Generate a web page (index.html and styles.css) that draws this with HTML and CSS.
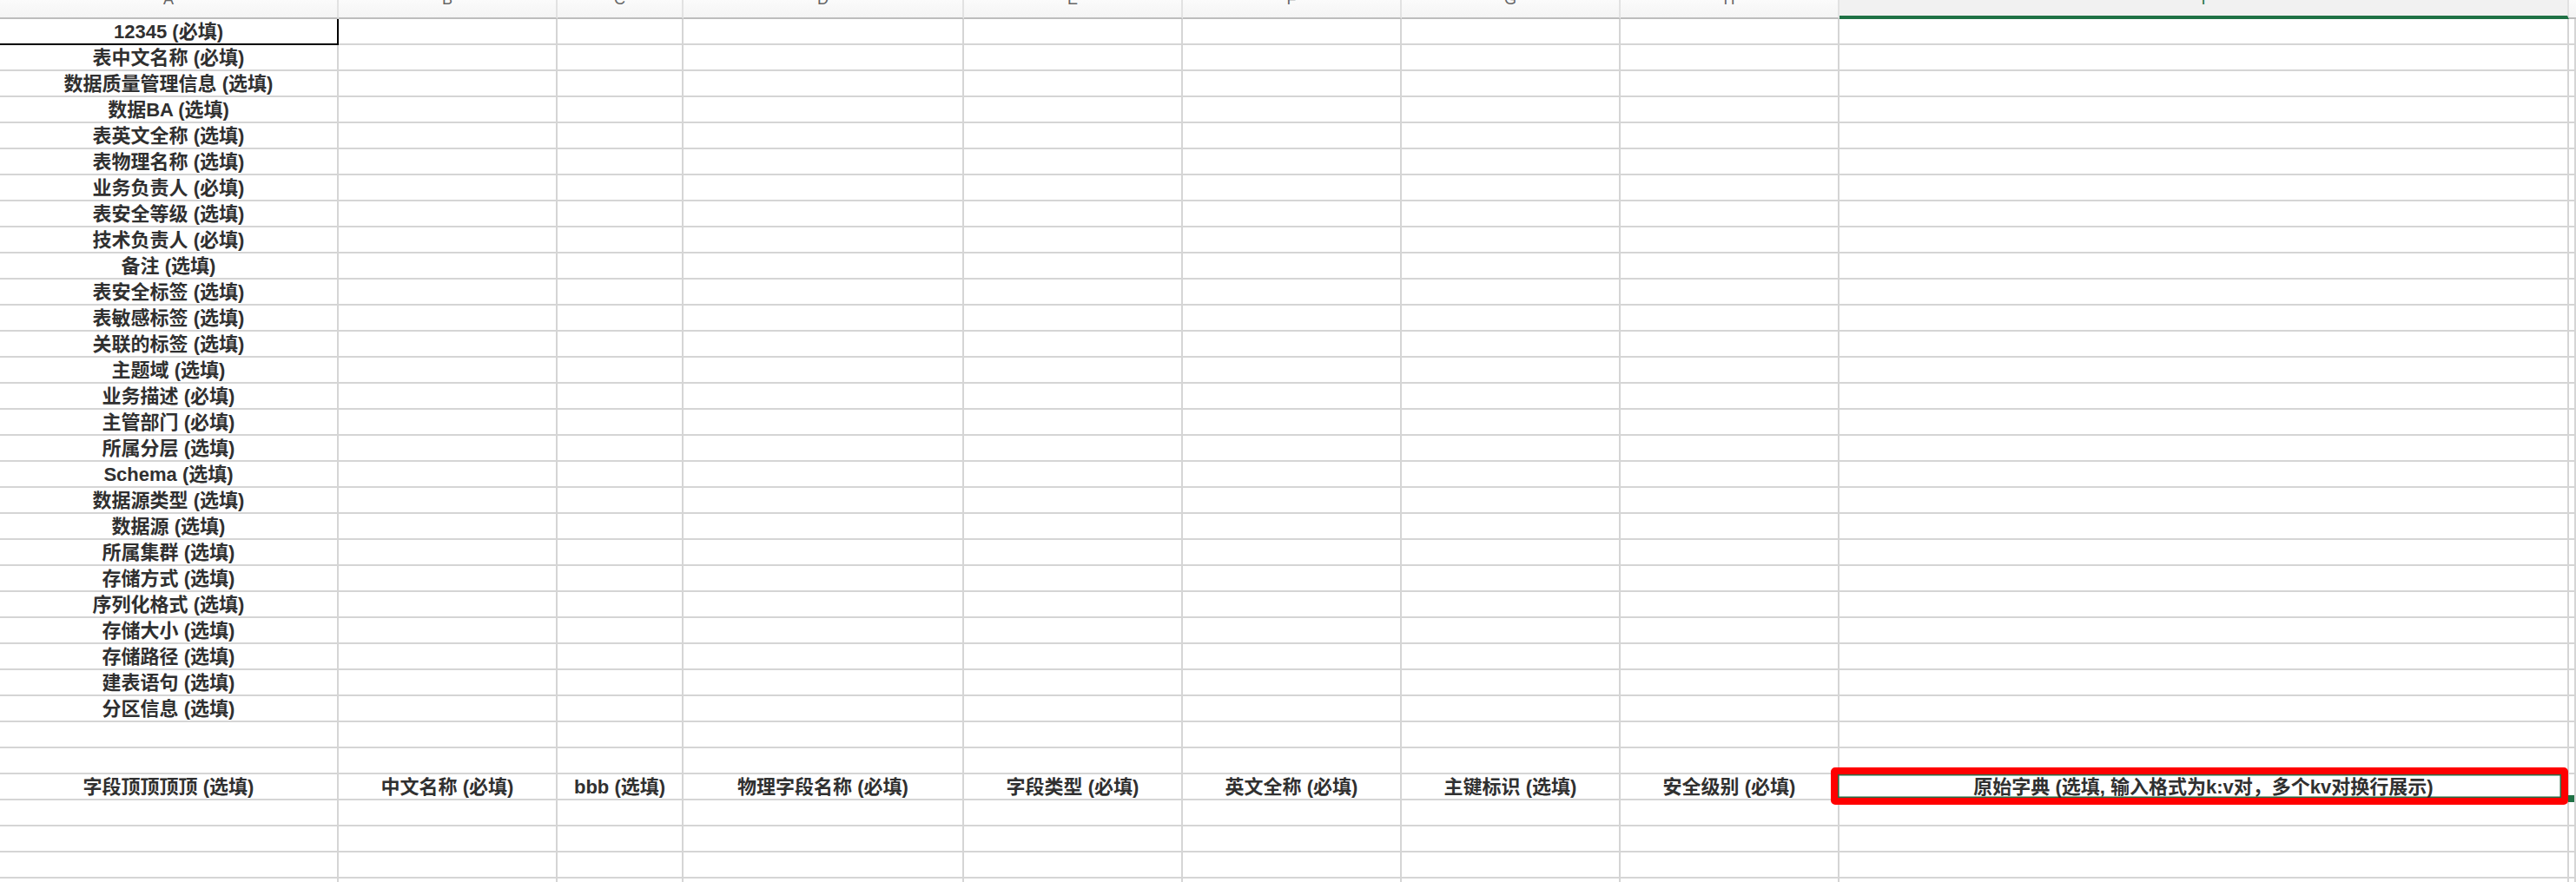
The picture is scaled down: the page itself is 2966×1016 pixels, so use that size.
FILE: index.html
```html
<!DOCTYPE html>
<html lang="zh-CN">
<head>
<meta charset="utf-8">
<title>Sheet</title>
<link rel="stylesheet" href="styles.css">
</head>
<body>
<table class="sheet">
<colgroup>
<col class="w-a"><col class="w-b"><col class="w-c"><col class="w-d"><col class="w-b"><col class="w-b"><col class="w-b"><col class="w-b"><col class="w-i"><col class="w-j">
</colgroup>
<thead>
<tr>
<th class="hd"><div class="hd-in"><span class="lt">A</span></div></th>
<th class="hd"><div class="hd-in"><span class="lt">B</span></div></th>
<th class="hd"><div class="hd-in"><span class="lt">C</span></div></th>
<th class="hd"><div class="hd-in"><span class="lt">D</span></div></th>
<th class="hd"><div class="hd-in"><span class="lt">E</span></div></th>
<th class="hd"><div class="hd-in"><span class="lt">F</span></div></th>
<th class="hd"><div class="hd-in"><span class="lt">G</span></div></th>
<th class="hd"><div class="hd-in"><span class="lt">H</span></div></th>
<th class="hd hd-sel"><div class="hd-in"><span class="lt lt-sel">I</span></div></th>
<th class="hd hd-end"><div class="hd-in"></div></th>
</tr>
</thead>
<tbody>
<tr><td class="t a1">12345 (必填)</td><td></td><td></td><td></td><td></td><td></td><td></td><td></td><td></td><td></td></tr>
<tr><td class="t">表中文名称 (必填)</td><td></td><td></td><td></td><td></td><td></td><td></td><td></td><td></td><td></td></tr>
<tr><td class="t">数据质量管理信息 (选填)</td><td></td><td></td><td></td><td></td><td></td><td></td><td></td><td></td><td></td></tr>
<tr><td class="t">数据BA (选填)</td><td></td><td></td><td></td><td></td><td></td><td></td><td></td><td></td><td></td></tr>
<tr><td class="t">表英文全称 (选填)</td><td></td><td></td><td></td><td></td><td></td><td></td><td></td><td></td><td></td></tr>
<tr><td class="t">表物理名称 (选填)</td><td></td><td></td><td></td><td></td><td></td><td></td><td></td><td></td><td></td></tr>
<tr><td class="t">业务负责人 (必填)</td><td></td><td></td><td></td><td></td><td></td><td></td><td></td><td></td><td></td></tr>
<tr><td class="t">表安全等级 (选填)</td><td></td><td></td><td></td><td></td><td></td><td></td><td></td><td></td><td></td></tr>
<tr><td class="t">技术负责人 (必填)</td><td></td><td></td><td></td><td></td><td></td><td></td><td></td><td></td><td></td></tr>
<tr><td class="t">备注 (选填)</td><td></td><td></td><td></td><td></td><td></td><td></td><td></td><td></td><td></td></tr>
<tr><td class="t">表安全标签 (选填)</td><td></td><td></td><td></td><td></td><td></td><td></td><td></td><td></td><td></td></tr>
<tr><td class="t">表敏感标签 (选填)</td><td></td><td></td><td></td><td></td><td></td><td></td><td></td><td></td><td></td></tr>
<tr><td class="t">关联的标签 (选填)</td><td></td><td></td><td></td><td></td><td></td><td></td><td></td><td></td><td></td></tr>
<tr><td class="t">主题域 (选填)</td><td></td><td></td><td></td><td></td><td></td><td></td><td></td><td></td><td></td></tr>
<tr><td class="t">业务描述 (必填)</td><td></td><td></td><td></td><td></td><td></td><td></td><td></td><td></td><td></td></tr>
<tr><td class="t">主管部门 (必填)</td><td></td><td></td><td></td><td></td><td></td><td></td><td></td><td></td><td></td></tr>
<tr><td class="t">所属分层 (选填)</td><td></td><td></td><td></td><td></td><td></td><td></td><td></td><td></td><td></td></tr>
<tr><td class="t">Schema (选填)</td><td></td><td></td><td></td><td></td><td></td><td></td><td></td><td></td><td></td></tr>
<tr><td class="t">数据源类型 (选填)</td><td></td><td></td><td></td><td></td><td></td><td></td><td></td><td></td><td></td></tr>
<tr><td class="t">数据源 (选填)</td><td></td><td></td><td></td><td></td><td></td><td></td><td></td><td></td><td></td></tr>
<tr><td class="t">所属集群 (选填)</td><td></td><td></td><td></td><td></td><td></td><td></td><td></td><td></td><td></td></tr>
<tr><td class="t">存储方式 (选填)</td><td></td><td></td><td></td><td></td><td></td><td></td><td></td><td></td><td></td></tr>
<tr><td class="t">序列化格式 (选填)</td><td></td><td></td><td></td><td></td><td></td><td></td><td></td><td></td><td></td></tr>
<tr><td class="t">存储大小 (选填)</td><td></td><td></td><td></td><td></td><td></td><td></td><td></td><td></td><td></td></tr>
<tr><td class="t">存储路径 (选填)</td><td></td><td></td><td></td><td></td><td></td><td></td><td></td><td></td><td></td></tr>
<tr><td class="t">建表语句 (选填)</td><td></td><td></td><td></td><td></td><td></td><td></td><td></td><td></td><td></td></tr>
<tr><td class="t">分区信息 (选填)</td><td></td><td></td><td></td><td></td><td></td><td></td><td></td><td></td><td></td></tr>
<tr><td></td><td></td><td></td><td></td><td></td><td></td><td></td><td></td><td></td><td></td></tr>
<tr><td></td><td></td><td></td><td></td><td></td><td></td><td></td><td></td><td></td><td></td></tr>
<tr>
<td class="t">字段顶顶顶顶 (选填)</td>
<td class="t">中文名称 (必填)</td>
<td class="t">bbb (选填)</td>
<td class="t">物理字段名称 (必填)</td>
<td class="t">字段类型 (必填)</td>
<td class="t">英文全称 (必填)</td>
<td class="t">主键标识 (选填)</td>
<td class="t">安全级别 (必填)</td>
<td class="t sel"><span class="sel-text">原始字典 (选填, 输入格式为k:v对，多个kv对换行展示)</span><span class="mark"></span><span class="handle"></span></td>
<td></td>
</tr>
<tr><td></td><td></td><td></td><td></td><td></td><td></td><td></td><td></td><td></td><td></td></tr>
<tr><td></td><td></td><td></td><td></td><td></td><td></td><td></td><td></td><td></td><td></td></tr>
<tr><td></td><td></td><td></td><td></td><td></td><td></td><td></td><td></td><td></td><td></td></tr>
<tr><td></td><td></td><td></td><td></td><td></td><td></td><td></td><td></td><td></td><td></td></tr>
</tbody>
</table>
</body>
</html>
```

FILE: styles.css
```css
html, body {
  margin: 0;
  padding: 0;
  background: #ffffff;
  overflow: hidden;
}

body {
  width: 2966px;
  height: 1016px;
  font-family: "Liberation Sans", "Noto Sans CJK SC", sans-serif;
}

.sheet {
  border-collapse: separate;
  border-spacing: 0;
  table-layout: fixed;
  width: 2966px;
}

.w-a { width: 390px; }
.w-b { width: 252px; }
.w-c { width: 145px; }
.w-d { width: 323px; }
.w-i { width: 840px; }
.w-j { width: 8px; }

.sheet td {
  box-sizing: border-box;
  height: 30px;
  padding: 1px 0 0;
  border-right: 2px solid #d5d5d5;
  border-bottom: 2px solid #d5d5d5;
  line-height: 26px;
  overflow: hidden;
}

.sheet .t {
  text-align: center;
  white-space: nowrap;
  font-size: 22px;
  font-weight: 700;
  color: #303030;
}

.sheet .a1 {
  border-right: 2px solid #000000;
  border-bottom: 2px solid #000000;
}

.hd {
  box-sizing: border-box;
  height: 22px;
  padding: 0;
  background: linear-gradient(#fbfbfb, #f4f4f4);
  border-right: 2px solid #e2e2e2;
  border-bottom: 2px solid #bdbdbd;
  font-weight: 400;
}

.hd-in {
  height: 20px;
  overflow: hidden;
  display: flex;
  justify-content: center;
  align-items: flex-end;
}

.lt {
  font-size: 18px;
  line-height: 18px;
  margin-bottom: 12px;
  color: #666666;
}

.hd-sel {
  background: #f1f1f1;
  border-bottom: 4px solid #1f7145;
}

.hd-sel .hd-in {
  height: 18px;
}

.lt-sel {
  color: #1f7145;
  margin-bottom: 10px;
}

.hd-end {
  border-right: none;
}

.sheet .sel {
  position: relative;
  overflow: visible;
}

.sel-text {
  position: relative;
  z-index: 2;
}

.mark {
  position: absolute;
  left: -10px;
  top: -8px;
  right: -1px;
  bottom: -7px;
  border: 8px solid #ff0000;
  border-radius: 5px;
  box-shadow: inset 0 0 0 1.5px #2b6b45;
  z-index: 1;
}

.handle {
  position: absolute;
  right: -8px;
  bottom: -4px;
  width: 7px;
  height: 8px;
  background: #1f7145;
  z-index: 0;
}
```
